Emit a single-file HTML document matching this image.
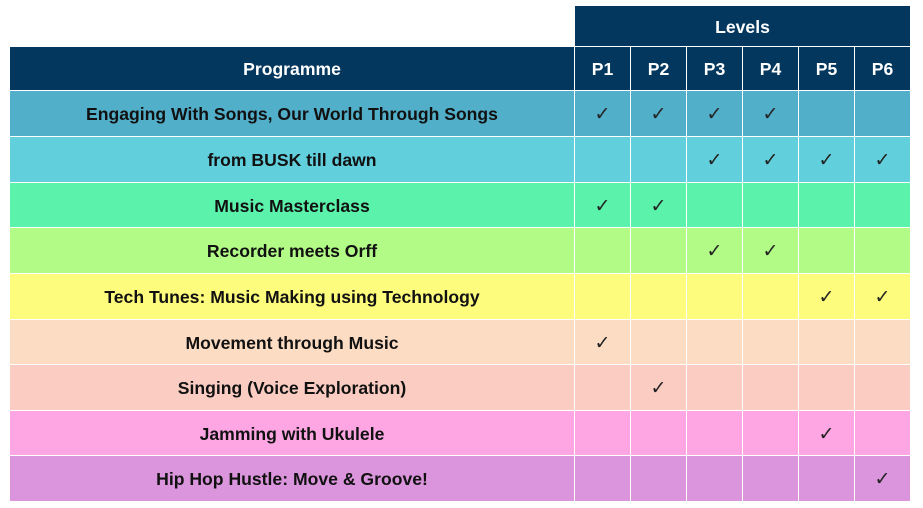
<!DOCTYPE html>
<html><head><style>
body{margin:0;width:923px;height:508px;background:#fff;position:relative;overflow:hidden;font-family:"Liberation Sans",sans-serif;}
.c{position:absolute;box-sizing:border-box;display:flex;align-items:center;justify-content:center;font-size:17.6px;font-weight:bold;color:#111;border-right:1px solid #fff;border-bottom:1px solid #fff;padding-top:2px;}
.h{background:#04375e;color:#fff;}
.k{font-weight:normal;font-size:19px;color:#222;}
</style></head><body>
<div class="c h" style="left:575px;top:6px;width:336px;height:41px;">Levels</div>
<div id="t"></div>
<script>
var rows=[["Engaging With Songs, Our World Through Songs","#52afc9",[1,1,1,1,0,0]],
["from BUSK till dawn","#62cfdd",[0,0,1,1,1,1]],
["Music Masterclass","#5bf3ac",[1,1,0,0,0,0]],
["Recorder meets Orff","#b2fb86",[0,0,1,1,0,0]],
["Tech Tunes: Music Making using Technology","#fefc7c",[0,0,0,0,1,1]],
["Movement through Music","#fddcc4",[1,0,0,0,0,0]],
["Singing (Voice Exploration)","#fbcdc2",[0,1,0,0,0,0]],
["Jamming with Ukulele","#fea6e3",[0,0,0,0,1,0]],
["Hip Hop Hustle: Move & Groove!","#db95dc",[0,0,0,0,0,1]]];
var tops=[91,137,183,228,274,320,365,411,456,502];
var cols=[575,631,687,743,799,855,911];
var h='<div class="c h" style="left:10px;top:47px;width:565px;height:44px;">Programme</div>';
for(var j=0;j<6;j++)h+='<div class="c h" style="left:'+cols[j]+'px;top:47px;width:'+(cols[j+1]-cols[j])+'px;height:44px;">P'+(j+1)+'</div>';
rows.forEach(function(r,i){var t=tops[i],hh=tops[i+1]-t;
h+='<div class="c" style="background:'+r[1]+';left:10px;top:'+t+'px;width:565px;height:'+hh+'px;">'+r[0].replace('&','&amp;')+'</div>';
for(var j=0;j<6;j++)h+='<div class="c k" style="background:'+r[1]+';left:'+cols[j]+'px;top:'+t+'px;width:'+(cols[j+1]-cols[j])+'px;height:'+hh+'px;">'+(r[2][j]?'✓':'')+'</div>';});
document.getElementById('t').innerHTML=h;
</script>
</body></html>
